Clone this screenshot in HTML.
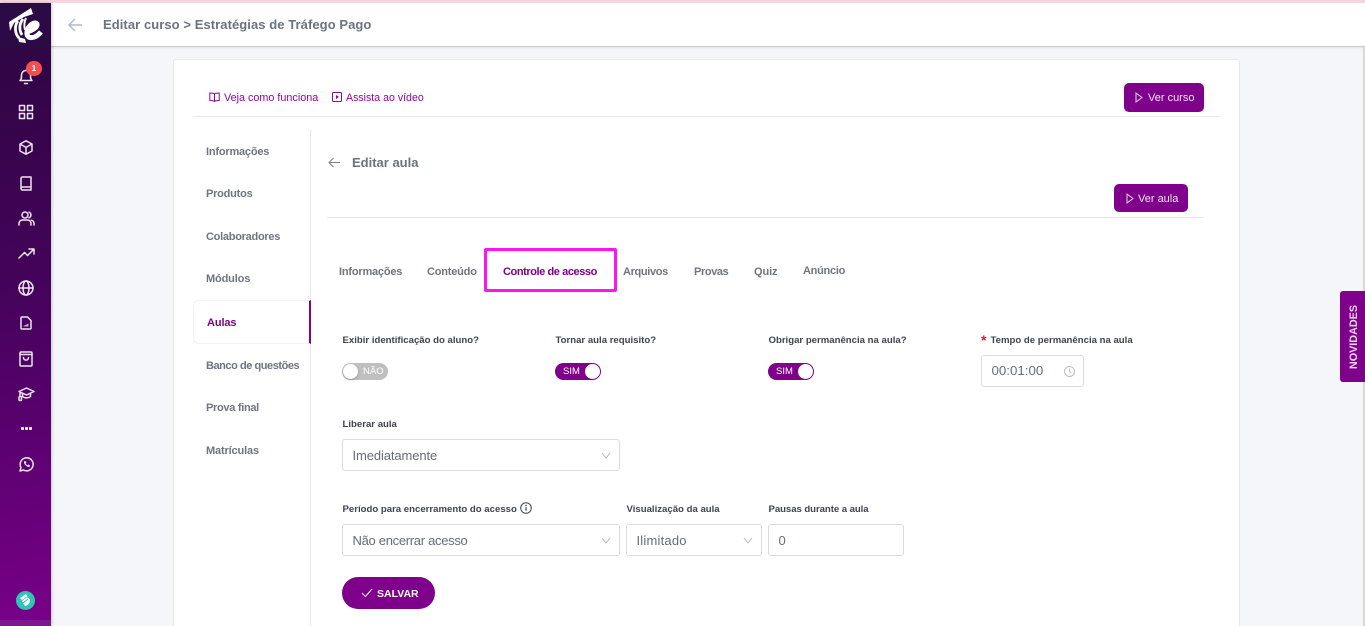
<!DOCTYPE html>
<html lang="pt-BR">
<head>
<meta charset="utf-8">
<title>Editar curso</title>
<style>
html,body{margin:0;padding:0;width:1365px;height:626px;overflow:hidden;background:#f5f6fa;font-family:"Liberation Sans",sans-serif;}
*{box-sizing:border-box;}
#root{position:relative;width:1365px;height:626px;overflow:hidden;}
.a{position:absolute;white-space:nowrap;}
.t{position:absolute;white-space:nowrap;line-height:14px;}
.menu{font-size:11px;font-weight:700;color:#6f7580;}
.tab{font-size:11px;font-weight:700;color:#6f7580;}
.lbl{font-size:9.6px;font-weight:700;color:#3f4350;}
.field{position:absolute;background:#fff;border:1px solid #dcdcdc;border-radius:3px;height:32px;font-size:13px;color:#666d78;line-height:31px;padding-left:9.5px;white-space:nowrap;}
.btn{position:absolute;background:#7f008a;border-radius:5px;}
svg{position:absolute;display:block;overflow:visible;}
.ic{fill:none;stroke:#efe3f2;stroke-width:1.5;stroke-linecap:round;stroke-linejoin:round;}
.chev{fill:none;stroke:#b5b5b5;stroke-width:1;}
.tog{position:absolute;width:46px;height:17px;border-radius:9px;font-size:9.5px;color:#fff;line-height:17px;}
.knob{position:absolute;width:15px;height:15px;border-radius:50%;background:#fff;top:1px;}
</style>
</head>
<body>
<div id="root">
<!-- top strip -->
<div class="a" style="left:0;top:0;width:1365px;height:3px;background:#f6d5df;"></div>
<!-- header -->
<div class="a" style="left:51px;top:3px;width:1314px;height:44px;background:#fff;border-bottom:1px solid #c9c9ce;box-shadow:0 1px 2px rgba(0,0,0,.08);"></div>
<svg style="left:67px;top:17px" width="16" height="16" viewBox="0 0 16 16"><path d="M15 8H2M8 2L2 8l6 6" fill="none" stroke="#b4bcc9" stroke-width="1.5"/></svg>
<div class="t" style="left:103px;top:18px;font-size:13px;font-weight:700;color:#6b7280;letter-spacing:.07px;">Editar curso &gt; Estratégias de Tráfego Pago</div>
<!-- scrollbar -->
<div class="a" style="left:1363px;top:47px;width:2px;height:579px;background:#d9d9d9;"></div>
<!-- sidebar -->
<div class="a" style="left:0;top:3px;width:51px;height:623px;background:linear-gradient(170deg,#2c0640 0%,#44035a 45%,#56016c 65%,#7a0088 100%);box-shadow:1px 0 3px rgba(0,0,0,.2);"></div>
<div class="a" style="left:0;top:3px;width:51px;height:45px;background:#2b0a45;"></div>
<div class="a" style="left:0;top:620px;width:51px;height:6px;background:#7a1a8a;"></div>
<!-- logo -->
<svg style="left:0;top:0" width="51" height="48" viewBox="0 0 51 48">
<path d="M9 22L31 8l2 6-9 3-10 6-4 8z" fill="#fff"/>
<path d="M18 21C14 26 15 34 19 38" fill="none" stroke="#fff" stroke-width="2.800"/>
<path d="M23 19C19 24 19 30 22 35" fill="none" stroke="#fff" stroke-width="2.800"/>
<path d="M26 18C24 22 24 26 25 30" fill="none" stroke="#fff" stroke-width="2"/>
<path d="M26 32C32 31 38 27 37 24C35 21 28 25 27 32C26 39 34 40 41 32" fill="none" stroke="#fff" stroke-width="5"/>
<path d="M18 37l7 2 1 4-7-1z" fill="#fff"/>
</svg>
<!-- bell -->
<svg class="ic" style="left:18px;top:68px" width="16" height="17" viewBox="0 0 16 17"><path d="M2 12.500c1.500-1 1.500-2.500 1.500-5 0-3 2-5 4.500-5s4.500 2 4.500 5c0 2.500 0 4 1.500 5zM6.500 15.500h3"/></svg>
<div class="a" style="left:26px;top:61px;width:16px;height:15px;border-radius:8px;background:#f25050;color:#fff;font-size:8.5px;font-weight:700;text-align:center;line-height:15px;">1</div>
<!-- grid -->
<svg class="ic" style="left:19px;top:105px" width="14" height="14" viewBox="0 0 14 14"><rect x=".5" y=".5" width="5" height="5"/><rect x="8.500" y=".5" width="5" height="5"/><rect x=".5" y="8.500" width="5" height="5"/><rect x="8.500" y="8.500" width="5" height="5"/></svg>
<!-- box -->
<svg class="ic" style="left:19px;top:140px" width="14" height="15" viewBox="0 0 14 15"><path d="M7 .8l6 3.200v7l-6 3.200L1 11V4zM1 4l6 3.400L13 4M7 7.400v6.800"/></svg>
<!-- book -->
<svg class="ic" style="left:20px;top:176px" width="12" height="15" viewBox="0 0 12 15"><path d="M1 12.500V2.500A1.500 1.500 0 0 1 2.500 1H11v13H2.500A1.500 1.500 0 0 1 1 12.500a1.500 1.500 0 0 1 1.500-1.500H11"/></svg>
<!-- users -->
<svg class="ic" style="left:18px;top:211px" width="17" height="15" viewBox="0 0 17 15" stroke-width="1.200"><circle cx="7" cy="4" r="3"/><path d="M1 14v-1.500A3.500 3.500 0 0 1 4.500 9h5a3.500 3.500 0 0 1 3.500 3.500V14M11 1.200a3 3 0 0 1 0 5.600M13.500 9.200a3.500 3.500 0 0 1 2.500 3.300V14"/></svg>
<!-- trend -->
<svg class="ic" style="left:18px;top:248px" width="17" height="11" viewBox="0 0 17 11"><path d="M1 10l5.500-5.500 3 3L16 1M11 1h5v5"/></svg>
<!-- globe -->
<svg class="ic" style="left:18px;top:280px" width="16" height="16" viewBox="0 0 16 16"><circle cx="8" cy="8" r="7"/><path d="M1 8h14"/><ellipse cx="8" cy="8" rx="3" ry="7"/></svg>
<!-- doc -->
<svg class="ic" style="left:20px;top:316px" width="12" height="14" viewBox="0 0 12 14"><path d="M2 1h5.500L11 4.500V12a1 1 0 0 1-1 1H2a1 1 0 0 1-1-1V2a1 1 0 0 1 1-1z"/><path d="M3.500 10.500h5V7.500l-2 1-1 .5-2 1z" fill="#cfa9d6" stroke="none"/></svg>
<!-- bag -->
<svg class="ic" style="left:19px;top:351px" width="14" height="16" viewBox="0 0 14 16"><rect x="1" y="1" width="12" height="14" rx="1"/><path d="M1 3.500h12M4.500 6.500c0 3.500 5 3.500 5 0"/></svg>
<!-- grad -->
<svg class="ic" style="left:18px;top:387px" width="17" height="15" viewBox="0 0 17 15" stroke-width="1.100"><path d="M8.500 1L16 4.500 8.500 8 1 4.500zM4.500 6.500v3c2 1.800 6 1.800 8 0v-3M2 5.500v4"/><rect x="1" y="9.500" width="2.500" height="4" rx="1"/></svg>
<!-- dots -->
<div class="a" style="left:21px;top:427px;width:3px;height:3px;background:#fff;border-radius:1px;"></div>
<div class="a" style="left:25px;top:427px;width:3px;height:3px;background:#fff;border-radius:1px;"></div>
<div class="a" style="left:29px;top:427px;width:3px;height:3px;background:#fff;border-radius:1px;"></div>
<!-- whatsapp -->
<svg class="ic" style="left:19px;top:457px" width="15" height="15" viewBox="0 0 15 15"><path d="M1 14l1-3.500A6.500 6.500 0 1 1 4.500 13z"/><path d="M5 4.500c-.5 2.500 2.500 5.500 5.500 5.500l.5-1.500-1.500-1-1 .7c-.8-.3-1.500-1-1.800-1.800l.7-1-1-1.500z" fill="#efe3f2" stroke="none"/></svg>
<!-- bottom logo -->
<div class="a" style="left:16px;top:591px;width:19px;height:19px;border-radius:50%;background:#2ec4b6;"></div>
<svg style="left:16px;top:591px" width="19" height="19" viewBox="0 0 19 19"><path d="M4 7l6-4 1.500 2L6 9zM6 10l5-4 3 2.500c.5 3-2 6-5 6.500z" fill="#fff"/><path d="M7 12l5-4" stroke="#2ec4b6" stroke-width="1"/></svg>

<!-- novidades -->
<div class="a" style="left:1340px;top:291px;width:25px;height:91px;background:#7f008a;border-radius:3px 0 0 3px;"></div>
<div class="t" style="left:1313.500px;top:330px;width:80px;text-align:center;transform:rotate(-90deg);font-size:10.800px;font-weight:700;color:#e9d5ee;">NOVIDADES</div>

<!-- card -->
<div class="a" style="left:173px;top:59px;width:1067px;height:567px;background:#fff;border:1px solid #e8e8ec;border-bottom:0;border-radius:3px 3px 0 0;"></div>
<div class="a" style="left:193px;top:116px;width:1026px;height:1px;background:#e8e8e8;"></div>
<div class="a" style="left:310px;top:130px;width:1px;height:496px;background:#e8e8e8;"></div>
<div class="a" style="left:327px;top:217px;width:877px;height:1px;background:#e8e8e8;"></div>

<!-- help links -->
<svg style="left:209px;top:92px" width="11" height="10" viewBox="0 0 11 10"><path d="M5.500 2C4.500 1 3 1 .8 1v7.500c2.200 0 3.700 0 4.700 1 1-1 2.500-1 4.700-1V1C8 1 6.500 1 5.500 2zv7.500" fill="none" stroke="#8a0a96" stroke-width="1"/></svg>
<div class="t" style="left:224px;top:91px;font-size:10.800px;color:#8a0a96;">Veja como funciona</div>
<svg style="left:332px;top:92px" width="10" height="10" viewBox="0 0 10 10"><rect x=".5" y=".5" width="9" height="9" rx="1" fill="none" stroke="#8a0a96"/><path d="M4 3l3 2-3 2z" fill="#8a0a96"/></svg>
<div class="t" style="left:346px;top:91px;font-size:10.600px;color:#8a0a96;">Assista ao vídeo</div>

<!-- Ver curso -->
<div class="btn" style="left:1124px;top:83px;width:80px;height:29px;"></div>
<svg style="left:1135px;top:92px" width="8" height="11" viewBox="0 0 8 11"><path d="M1 1l6 4.500L1 10z" fill="none" stroke="#ead6ee" stroke-width="1"/></svg>
<div class="t" style="left:1148px;top:91px;font-size:11px;color:#f3e6f5;">Ver curso</div>
<!-- Ver aula -->
<div class="btn" style="left:1114px;top:184px;width:74px;height:28px;"></div>
<svg style="left:1126px;top:193px" width="8" height="11" viewBox="0 0 8 11"><path d="M1 1l6 4.500L1 10z" fill="none" stroke="#ead6ee" stroke-width="1"/></svg>
<div class="t" style="left:1138px;top:192px;font-size:11px;color:#f3e6f5;">Ver aula</div>

<!-- left menu -->
<div class="t menu" style="left:206px;top:145px;letter-spacing:-.2px;">Informações</div>
<div class="t menu" style="left:206px;top:187px;letter-spacing:-.22px;">Produtos</div>
<div class="t menu" style="left:206px;top:230px;letter-spacing:-.27px;">Colaboradores</div>
<div class="t menu" style="left:206px;top:272px;letter-spacing:-.14px;">Módulos</div>
<div class="a" style="left:193px;top:300px;width:118px;height:44px;background:#fff;border:1px solid #f3f3f3;border-right:2px solid #7f008a;border-radius:6px 0 0 6px;"></div>
<div class="t menu" style="left:207px;top:316px;color:#7f008a;letter-spacing:-.1px;">Aulas</div>
<div class="t menu" style="left:206px;top:359px;letter-spacing:-.45px;">Banco de questões</div>
<div class="t menu" style="left:206px;top:401px;letter-spacing:-.3px;">Prova final</div>
<div class="t menu" style="left:206px;top:444px;letter-spacing:-.15px;">Matrículas</div>

<!-- title -->
<svg style="left:328px;top:157px" width="12" height="11" viewBox="0 0 12 11"><path d="M12 5.500H1M5.500 1L1 5.500 5.500 10" fill="none" stroke="#7b818c" stroke-width="1"/></svg>
<div class="t" style="left:352px;top:156px;font-size:13px;font-weight:700;color:#6b7280;">Editar aula</div>

<!-- tabs -->
<div class="t tab" style="left:339px;top:265px;letter-spacing:-.2px;">Informações</div>
<div class="t tab" style="left:427px;top:265px;letter-spacing:-.2px;">Conteúdo</div>
<div class="a" style="left:484px;top:248px;width:133px;height:44px;border:3px solid #ff14f0;border-radius:2px;"></div>
<div class="t tab" style="left:503px;top:265px;color:#7f008a;letter-spacing:-.42px;">Controle de acesso</div>
<div class="t tab" style="left:623px;top:265px;letter-spacing:-.35px;">Arquivos</div>
<div class="t tab" style="left:694px;top:265px;letter-spacing:-.38px;">Provas</div>
<div class="t tab" style="left:754px;top:265px;letter-spacing:-.1px;">Quiz</div>
<div class="t tab" style="left:803px;top:264px;letter-spacing:-.28px;">Anúncio</div>

<!-- row 1 -->
<div class="t lbl" style="left:342.500px;top:334px;">Exibir identificação do aluno?</div>
<div class="t lbl" style="left:555.500px;top:334px;">Tornar aula requisito?</div>
<div class="t lbl" style="left:768.500px;top:334px;">Obrigar permanência na aula?</div>
<div class="t" style="left:981px;top:333px;font-size:14px;font-weight:700;color:#f5142d;">*</div>
<div class="t lbl" style="left:990.500px;top:334px;">Tempo de permanência na aula</div>

<div class="tog" style="left:342px;top:363px;background:#bfbfbf;"><span class="knob" style="left:1px;box-shadow:0 1px 2px rgba(0,0,0,.25);"></span><span style="position:absolute;left:21px;">NÃO</span></div>
<div class="tog" style="left:555px;top:363px;background:#7f008a;"><span style="position:absolute;left:8px;">SIM</span><span class="knob" style="left:30px;"></span></div>
<div class="tog" style="left:768px;top:363px;background:#7f008a;"><span style="position:absolute;left:8px;">SIM</span><span class="knob" style="left:30px;"></span></div>

<div class="field" style="left:981px;top:355px;width:103px;font-size:13.300px;line-height:30px;">00:01:00</div>
<svg style="left:1064px;top:366px" width="11" height="11" viewBox="0 0 11 11"><circle cx="5.500" cy="5.500" r="5" fill="none" stroke="#bdbdbd"/><path d="M5.500 2.500v3l2 1.500" fill="none" stroke="#bdbdbd"/></svg>

<!-- row 2 -->
<div class="t lbl" style="left:342.500px;top:418px;">Liberar aula</div>
<div class="field" style="left:342px;top:439px;width:278px;letter-spacing:-.1px;">Imediatamente</div>
<svg class="chev" style="left:601px;top:452px" width="10" height="7" viewBox="0 0 10 7"><path d="M1 1l4 5 4-5"/></svg>

<!-- row 3 -->
<div class="t lbl" style="left:342.500px;top:503px;">Período para encerramento do acesso</div>
<svg style="left:520px;top:502px" width="12" height="12" viewBox="0 0 12 12"><circle cx="6" cy="6" r="5.300" fill="none" stroke="#3f4350"/><path d="M6 5.200v3.600" stroke="#3f4350" stroke-width="1.200"/><circle cx="6" cy="3.400" r=".8" fill="#3f4350"/></svg>
<div class="t lbl" style="left:626.500px;top:503px;">Visualização da aula</div>
<div class="t lbl" style="left:768.500px;top:503px;letter-spacing:-.06px;">Pausas durante a aula</div>

<div class="field" style="left:342px;top:524px;width:278px;letter-spacing:-.3px;">Não encerrar acesso</div>
<svg class="chev" style="left:601px;top:537px" width="10" height="7" viewBox="0 0 10 7"><path d="M1 1l4 5 4-5"/></svg>
<div class="field" style="left:626px;top:524px;width:136px;letter-spacing:.2px;">Ilimitado</div>
<svg class="chev" style="left:743px;top:537px" width="10" height="7" viewBox="0 0 10 7"><path d="M1 1l4 5 4-5"/></svg>
<div class="field" style="left:768px;top:524px;width:136px;">0</div>

<!-- save -->
<div class="a" style="left:342px;top:577px;width:93px;height:32px;background:#7f008a;border-radius:16px;"></div>
<svg style="left:361px;top:588px" width="12" height="10" viewBox="0 0 12 10"><path d="M1 5l3.500 3.500L11 1" fill="none" stroke="#f3e6f5" stroke-width="1.100"/></svg>
<div class="t" style="left:377px;top:587px;font-size:10.500px;font-weight:700;color:#fff;">SALVAR</div>
</div>
</body>
</html>
